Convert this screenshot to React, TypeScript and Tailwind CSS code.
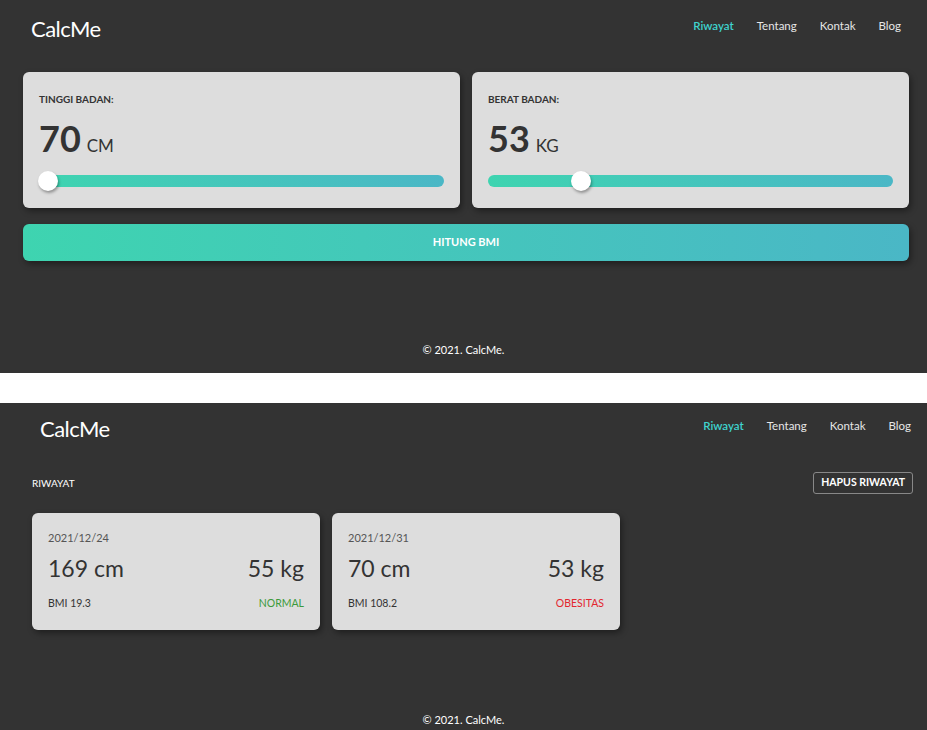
const font = { fontFamily: "Lato, 'Open Sans', sans-serif" };

function Header({ shift }: { shift: boolean }) {
  return (
    <header className={`flex items-center justify-between ${shift ? "h-[50px] pl-[40px] pr-[16px]" : "h-[56px] pl-[31px] pr-[26px]"}`}>
      <div className="text-[22px] text-white tracking-tight">CalcMe</div>
      <nav className="flex items-center gap-[23px] text-[11.5px] text-[#e6e6e6] -mt-[5px]">
        <a className="text-[#3fd3cf] font-semibold">Riwayat</a>
        <a>Tentang</a>
        <a>Kontak</a>
        <a>Blog</a>
      </nav>
    </header>
  );
}

function Slider({ pos }: { pos: number }) {
  return (
    <div className="relative h-[12px] mt-[19px] rounded-full bg-gradient-to-r from-[#3ed4b0] to-[#4ab7c6]">
      <div
        className="absolute top-1/2 -translate-y-1/2 w-[20px] h-[20px] rounded-full bg-white shadow-[1px_2px_3px_rgba(0,0,0,0.35)]"
        style={{ left: pos - 10 }}
      />
    </div>
  );
}

function InputCard({ label, value, unit, pos }: { label: string; value: string; unit: string; pos: number }) {
  return (
    <div className="flex-1 bg-[#dddddd] rounded-[6px] px-[16px] pt-[20px] pb-[21px] shadow-[2px_3px_6px_rgba(0,0,0,0.4)]">
      <div className="text-[10px] font-bold text-[#333]">{label}</div>
      <div className="flex items-baseline gap-[6px] mt-[13px] text-[#333] leading-none">
        <span className="text-[36px] font-bold">{value}</span>
        <span className="text-[17px]">{unit}</span>
      </div>
      <Slider pos={pos} />
    </div>
  );
}

function HistoryCard({ date, h, w, bmi, status, color }: { date: string; h: string; w: string; bmi: string; status: string; color: string }) {
  return (
    <div className="w-[288px] bg-[#dddddd] rounded-[6px] px-[16px] pt-[17px] pb-[19px] shadow-[2px_3px_6px_rgba(0,0,0,0.4)] text-[#333]">
      <div className="text-[11px] text-[#555]">{date}</div>
      <div className="flex justify-between items-baseline mt-[10px] text-[23px] leading-none">
        <span>{h}</span>
        <span>{w}</span>
      </div>
      <div className="flex justify-between mt-[16px] text-[10.5px]">
        <span>{bmi}</span>
        <span className={color}>{status}</span>
      </div>
    </div>
  );
}

export default function App() {
  return (
    <div style={font} className="w-[927px] h-[730px] bg-white overflow-hidden">
      <section className="h-[373px] bg-[#333333] flex flex-col">
        <Header shift={false} />
        <div className="pl-[23px] pr-[18px] pt-[16px]">
          <div className="flex gap-[12px]">
            <InputCard label="TINGGI BADAN:" value="70" unit="CM" pos={9} />
            <InputCard label="BERAT BADAN:" value="53" unit="KG" pos={93} />
          </div>
          <button className="mt-[16px] w-full h-[37px] rounded-[6px] bg-gradient-to-r from-[#3ed4b0] to-[#4ab7c6] text-white text-[11px] font-bold shadow-[2px_3px_6px_rgba(0,0,0,0.4)]">
            HITUNG BMI
          </button>
        </div>
        <footer className="mt-auto mb-[15px] text-center text-[11px] text-white">© 2021. CalcMe.</footer>
      </section>
      <section className="mt-[30px] h-[327px] bg-[#333333] flex flex-col">
        <Header shift={true} />
        <div className="flex items-center justify-between pl-[32px] pr-[14px] mt-[19px]">
          <div className="text-[10px] text-white">RIWAYAT</div>
          <button className="border border-[#888] rounded-[3px] px-[7px] h-[22px] text-[10.5px] font-bold text-white">HAPUS RIWAYAT</button>
        </div>
        <div className="flex gap-[12px] pl-[32px] mt-[19px]">
          <HistoryCard date="2021/12/24" h="169 cm" w="55 kg" bmi="BMI 19.3" status="NORMAL" color="text-[#3b9a3b]" />
          <HistoryCard date="2021/12/31" h="70 cm" w="53 kg" bmi="BMI 108.2" status="OBESITAS" color="text-[#e3262f]" />
        </div>
        <footer className="mt-auto mb-[2px] text-center text-[11px] text-white">© 2021. CalcMe.</footer>
      </section>
    </div>
  );
}
